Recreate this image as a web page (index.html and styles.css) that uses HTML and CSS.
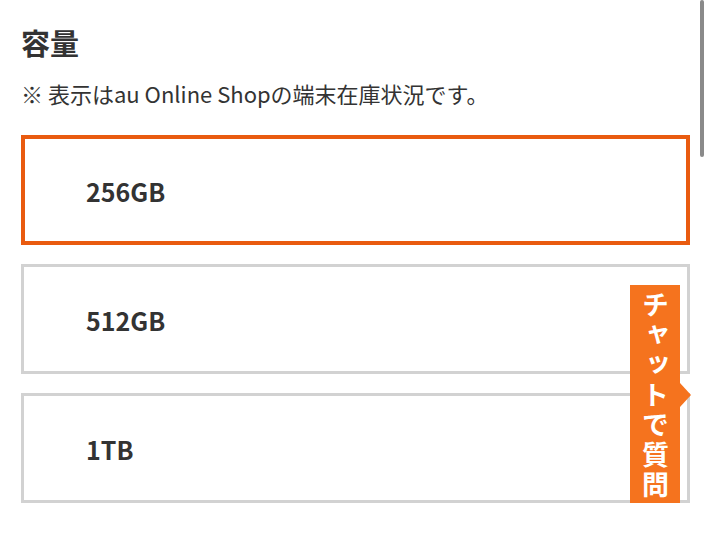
FILE: index.html
```html
<!DOCTYPE html>
<html lang="ja">
<head>
<meta charset="utf-8">
<title>容量</title>
<link rel="stylesheet" href="styles.css">
</head>
<body>
<main class="page">
  <h1 class="title">容量</h1>
  <p class="note">※ 表示はau Online Shopの端末在庫状況です。</p>
  <div class="options">
    <div class="option selected"><span class="label">256GB</span></div>
    <div class="option"><span class="label">512GB</span></div>
    <div class="option"><span class="label">1TB</span></div>
  </div>
</main>
<a class="chat" href="#">チャットで質問<span class="chat-arrow"></span></a>
<div class="scroll-thumb"></div>
</body>
</html>
```
FILE: styles.css
```css
html, body {
  margin: 0;
  padding: 0;
  background: #fff;
}
body {
  font-family: "Noto Sans CJK JP", "Noto Sans", sans-serif;
  color: #333;
  width: 710px;
  height: 549px;
  overflow: hidden;
  position: relative;
}
.page {
  padding: 22px 20px 0 21px;
}
.title {
  font-size: 29px;
  line-height: 40px;
  font-weight: 700;
  margin: 0;
  color: #333;
}
.note {
  font-size: 22px;
  line-height: 30px;
  margin: 16px 0 0 0;
  color: #333;
}
.options {
  margin-top: 27px;
  display: flex;
  flex-direction: column;
  gap: 19px;
}
.option {
  box-sizing: border-box;
  height: 110px;
  border: 3px solid #d2d2d2;
  display: flex;
  align-items: center;
  padding-left: 62px;
  background: #fff;
}
.option.selected {
  border: 4px solid #e95b0f;
  padding-left: 61px;
}
.label {
  font-size: 25px;
  font-weight: 700;
  color: #333;
  line-height: 1;
  margin-top: 2px;
}
.chat {
  position: absolute;
  left: 630px;
  top: 285px;
  width: 50px;
  height: 218px;
  background: #f5731e;
  color: #fff;
  text-decoration: none;
  writing-mode: vertical-rl;
  text-orientation: upright;
  font-size: 27px;
  font-weight: 700;
  line-height: 50px;
  letter-spacing: 3px;
  text-align: center;
  box-sizing: border-box;
  padding-top: 3px;
}
.chat-arrow {
  position: absolute;
  right: -11px;
  top: 98px;
  width: 0;
  height: 0;
  border-top: 12px solid transparent;
  border-bottom: 12px solid transparent;
  border-left: 11px solid #f5731e;
}
.scroll-thumb {
  position: absolute;
  left: 700px;
  top: 0;
  width: 4px;
  height: 157px;
  border-radius: 2px;
  background: #8a8a8a;
}
```
